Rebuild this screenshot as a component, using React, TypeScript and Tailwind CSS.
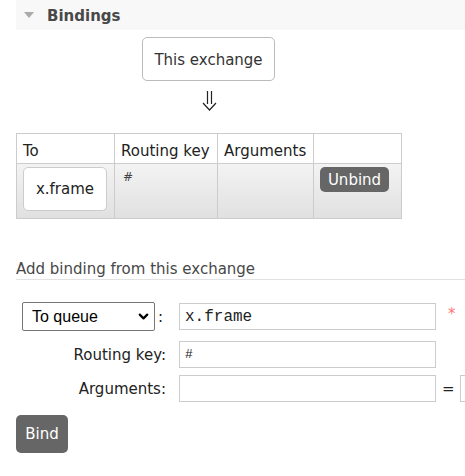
import { ChevronDown } from 'lucide-react'

const font = { fontFamily: '"DejaVu Sans", Verdana, sans-serif' }
const mono = { fontFamily: '"Liberation Mono", "Courier New", monospace' }

function Header() {
  return (
    <div className="ml-[16px] h-[30px] bg-[#f8f8f8] flex items-center">
      <span className="ml-[8px] w-0 h-0 border-l-[5px] border-r-[5px] border-t-[6px] border-l-transparent border-r-transparent border-t-[#aaa]" />
      <span className="ml-[13px] mt-[2px] text-[15px] leading-[18px] font-bold text-[#484848]">Bindings</span>
    </div>
  )
}

function DownArrow() {
  return (
    <svg className="ml-[202px] mt-[10px] block" width="15" height="20" viewBox="0 0 15 20" fill="none" stroke="#222" strokeWidth="1.2">
      <path d="M5.5 0 V13 M9.5 0 V13" />
      <path d="M1 12 L7.5 19 L14 12" />
    </svg>
  )
}

function BindingsTable() {
  return (
    <table className="ml-[16px] mt-[22px] border-collapse text-[15px] leading-[18px] text-[#222]">
      <thead>
        <tr className="h-[30px] bg-white">
          <th className="w-[98px] border border-[#ccc] font-normal text-left align-bottom px-[6px] pb-[3px]">To</th>
          <th className="w-[103px] border border-[#ccc] font-normal text-left align-bottom px-[6px] pb-[3px]">Routing key</th>
          <th className="w-[96px] border border-[#ccc] font-normal text-left align-bottom px-[6px] pb-[3px]">Arguments</th>
          <th className="w-[88px] border border-[#ccc]" />
        </tr>
      </thead>
      <tbody>
        <tr className="h-[55px] bg-gradient-to-b from-[#f3f3f3] to-[#e0e0e0]">
          <td className="border border-[#ccc] align-top px-[6px] pt-[3px]">
            <div className="w-[84px] h-[44px] bg-white border border-[#ccc] rounded-[5px] flex items-center justify-center">
              x.frame
            </div>
          </td>
          <td className="border border-[#ccc] align-top px-[8px] pt-[4px] text-[12px] text-[#444]">#</td>
          <td className="border border-[#ccc]" />
          <td className="border border-[#ccc] align-top px-[6px] pt-[3px]">
            <button className="w-[69px] h-[25px] bg-[#666] text-white rounded-[5px] text-[15px] leading-[18px]">Unbind</button>
          </td>
        </tr>
      </tbody>
    </table>
  )
}

function AddBinding() {
  const inputCls =
    'shrink-0 w-[257px] h-[27px] border border-[#ccc] bg-white px-[5px] text-[#222] outline-none'
  return (
    <div className="mt-[41px]">
      <div className="ml-[16px] pb-[1px] border-b border-[#e2e2e2] text-[15px] leading-[18px] text-[#484848]">
        Add binding from this exchange
      </div>

      <div className="flex items-center mt-[22px] h-[29px]">
        <div className="shrink-0 w-[163px] pl-[22px] flex items-center">
          <div
            className="relative w-[136px] h-[29px] border border-[#767676] rounded-[2px] bg-white flex items-center pl-[9px] text-[16px] text-black"
            style={{ fontFamily: '"Liberation Sans", Arial, sans-serif' }}
          >
            To queue
            <ChevronDown className="absolute right-[3px] top-[6px] w-[15px] h-[15px]" strokeWidth={3.5} />
          </div>
          <span className="ml-[3px] text-[15px] leading-[18px] text-[#222]">:</span>
        </div>
        <input className={`ml-[16px] text-[16px] ${inputCls}`} style={mono} defaultValue="x.frame" />
        <span className="ml-[12px] text-[15px] leading-[18px] text-[#f77] -mt-[6px]">*</span>
      </div>

      <div className="flex items-center mt-[10px] h-[27px]">
        <div className="shrink-0 w-[166px] text-right text-[15px] leading-[18px] text-[#222]">Routing key:</div>
        <input className={`ml-[13px] text-[13px] ${inputCls}`} style={mono} defaultValue="#" />
      </div>

      <div className="flex items-center mt-[7px] h-[27px]">
        <div className="shrink-0 w-[166px] text-right text-[15px] leading-[18px] text-[#222]">Arguments:</div>
        <input className={`ml-[13px] ${inputCls}`} />
        <span className="ml-[6px] text-[15px] leading-[18px] text-[#222]">=</span>
        <input className="shrink-0 ml-[5px] w-[60px] h-[27px] border border-[#ccc] bg-white" />
      </div>

      <button className="block ml-[16px] mt-[13px] w-[52px] h-[38px] bg-[#666] text-white rounded-[5px] text-[15px] leading-[18px]">
        Bind
      </button>
    </div>
  )
}

export default function App() {
  return (
    <div className="w-[465px] h-[476px] bg-white overflow-hidden" style={font}>
      <Header />
      <div className="ml-[142px] mt-[7px] w-[133px] h-[44px] border border-[#bbb] rounded-[5px] flex items-center justify-center pt-[2px] text-[15px] leading-[18px] text-[#333]">
        This exchange
      </div>
      <DownArrow />
      <BindingsTable />
      <AddBinding />
    </div>
  )
}
